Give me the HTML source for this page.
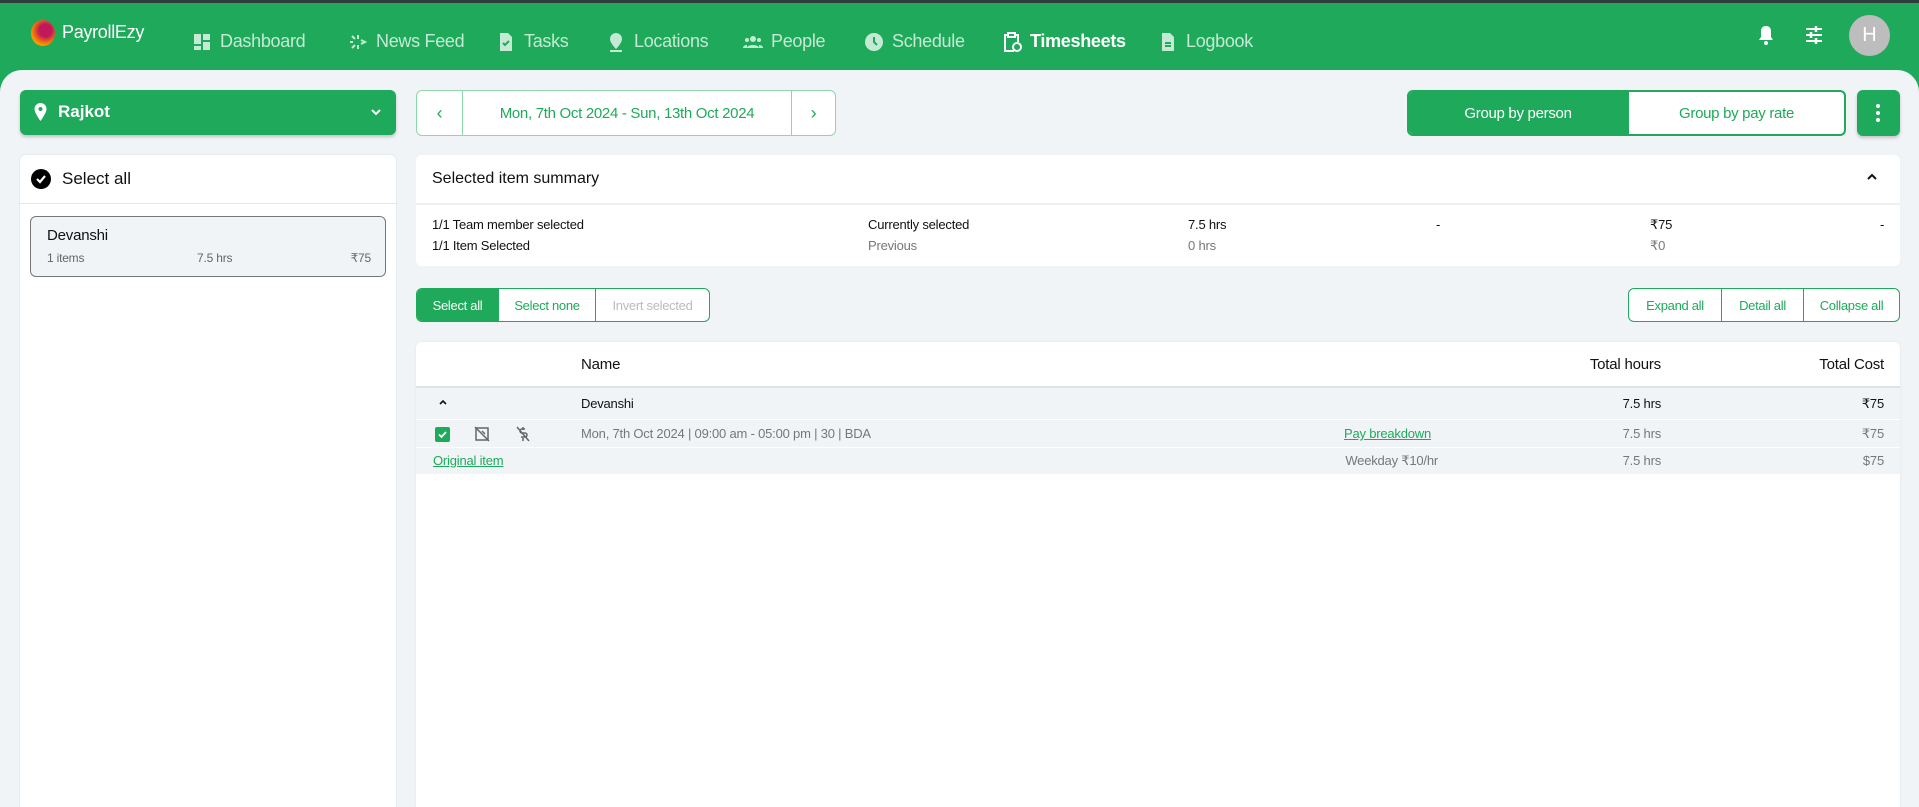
<!DOCTYPE html>
<html><head><meta charset="utf-8"><style>
*{box-sizing:border-box;margin:0;padding:0}
html,body{width:1919px;height:807px;overflow:hidden;background:#f0f4f7}
body{font-family:"Liberation Sans",sans-serif;position:relative;color:#111}
.top{position:absolute;left:0;top:0;width:1919px;height:3px;background:#2f3e3c;z-index:2}
.nav{position:absolute;top:0;left:0;width:1919px;height:100px;background:#1eaa5a}
.ni{position:absolute;top:31px;font-size:18px;color:#c5ead3;display:flex;align-items:center;gap:8px;letter-spacing:-.3px}
.ni svg{width:20px;height:20px}
.main{position:absolute;left:0;top:70px;width:1919px;height:737px;background:#f0f4f7;border-radius:22px 22px 0 0}
.abs{position:absolute}
.card{position:absolute;background:#fff;border-radius:6px 6px 0 0}
.g{color:#1eaa5a}
.btn{position:absolute;border:1px solid #1eaa5a;border-radius:6px;display:flex;overflow:hidden;background:#fff}
.btn div{display:flex;align-items:center;justify-content:center;font-size:13px;color:#1eaa5a;border-left:1px solid #1eaa5a;letter-spacing:-.3px}
.btn div:first-child{border-left:none}
.t{position:absolute;font-size:13px;letter-spacing:-.2px}
</style></head><body>
<div class="top"></div>
<div class="nav">
 <div class="abs" style="left:31px;top:20px;width:24px;height:26px;border-radius:50%;background:radial-gradient(circle at 60% 40%,#c2185b 30%,#f57c00 60%,#ffb300 80%)"></div>
 <div class="abs" style="left:62px;top:22px;font-size:18px;color:#fff;letter-spacing:-.3px">PayrollEzy</div>
 <div class="ni" style="left:192px"><svg viewBox="0 0 20 20" fill="#c5ead3"><rect x="2" y="2" width="7" height="10"/><rect x="11" y="2" width="7" height="6"/><rect x="2" y="14" width="7" height="4"/><rect x="11" y="10" width="7" height="8"/></svg>Dashboard</div>
 <div class="ni" style="left:348px"><svg viewBox="0 0 20 20" fill="none" stroke="#c5ead3" stroke-width="2"><path d="M4 4l3 3M2 10h3M4 16l3-3M10 3v4M10 13v4M13 8l4 2-4 2"/></svg>News Feed</div>
 <div class="ni" style="left:496px"><svg viewBox="0 0 20 20"><path d="M4 1h8l4 4v14H4z" fill="#c5ead3"/><path d="M7 11l2 2 4-4" stroke="#1eaa5a" stroke-width="2" fill="none"/></svg>Tasks</div>
 <div class="ni" style="left:606px"><svg viewBox="0 0 20 20" fill="#c5ead3"><path d="M10 1a6 6 0 0 1 6 6c0 4-6 10-6 10S4 11 4 7a6 6 0 0 1 6-6z"/><rect x="4" y="18" width="12" height="2"/></svg>Locations</div>
 <div class="ni" style="left:743px"><svg viewBox="0 0 20 20" fill="#c5ead3"><circle cx="10" cy="7" r="3"/><circle cx="4" cy="8" r="2"/><circle cx="16" cy="8" r="2"/><path d="M4 16c0-4 12-4 12 0zM0 16c0-3 4-3 4-3v3zM20 16c0-3-4-3-4-3v3z"/></svg>People</div>
 <div class="ni" style="left:864px"><svg viewBox="0 0 20 20"><circle cx="10" cy="10" r="9" fill="#c5ead3"/><path d="M10 5v5l3 3" stroke="#1eaa5a" stroke-width="2" fill="none"/></svg>Schedule</div>
 <div class="ni" style="left:1002px;color:#fff;font-weight:bold"><svg viewBox="0 0 20 20" fill="none" stroke="#fff" stroke-width="2"><path d="M12 19H3V3h3M13 3h3v7"/><rect x="6" y="1" width="7" height="4"/><circle cx="15" cy="15" r="4"/></svg>Timesheets</div>
 <div class="ni" style="left:1158px"><svg viewBox="0 0 20 20"><path d="M4 1h8l4 4v14H4z" fill="#c5ead3"/><path d="M7 11h6M7 14h6" stroke="#1eaa5a" stroke-width="2"/></svg>Logbook</div>
 <svg class="abs" style="left:1756px;top:24px" width="20" height="22" viewBox="0 0 20 22" fill="#fff"><path d="M10 2c-3 0-5 2-5 5v6l-2 3h14l-2-3V7c0-3-2-5-5-5z"/><circle cx="10" cy="19" r="2"/></svg>
 <svg class="abs" style="left:1804px;top:25px" width="20" height="20" viewBox="0 0 20 20" stroke="#fff" stroke-width="2"><path d="M2 4h16M2 10h16M2 16h16"/><path d="M12 1v6M7 7v6M12 13v6" stroke-width="2.5"/></svg>
 <div class="abs" style="left:1849px;top:15px;width:41px;height:41px;border-radius:50%;background:#bdbdbd;color:#fff;font-size:20px;display:flex;align-items:center;justify-content:center">H</div>
</div>
<div class="main"></div>
<div class="abs" style="left:20px;top:90px;width:376px;height:45px;background:#1eaa5a;border-radius:6px;box-shadow:0 2px 3px rgba(0,0,0,.2);color:#fff;font-size:17px;font-weight:bold">
 <svg class="abs" style="left:14px;top:13px" width="13" height="18" viewBox="0 0 13 18" fill="#fff"><path d="M6.5 0A6 6 0 0 1 12.5 6c0 4-6 12-6 12S.5 10 .5 6A6 6 0 0 1 6.5 0z"/><circle cx="6.5" cy="6" r="2" fill="#1eaa5a"/></svg>
 <span class="abs" style="left:38px;top:12px">Rajkot</span>
 <svg class="abs" style="left:350px;top:18px" width="12" height="8" viewBox="0 0 12 8" fill="none" stroke="#fff" stroke-width="2"><path d="M2 2l4 4 4-4"/></svg>
</div>
<div class="btn" style="left:416px;top:90px;width:420px;height:46px;border-color:#8fd6ac">
 <div style="width:45px;border-color:#8fd6ac;font-size:18px">‹</div>
 <div style="width:329px;border-color:#8fd6ac;font-size:15px">Mon, 7th Oct 2024 - Sun, 13th Oct 2024</div>
 <div style="flex:1;border-color:#8fd6ac;font-size:18px">›</div>
</div>
<div class="btn" style="left:1407px;top:90px;width:439px;height:46px;border-width:2px">
 <div style="width:218px;background:#1eaa5a;color:#fff;font-size:15px">Group by person</div>
 <div style="flex:1;font-size:15px;border-left:2px solid #1eaa5a">Group by pay rate</div>
</div>
<div class="abs" style="left:1857px;top:90px;width:43px;height:46px;background:#1eaa5a;border-radius:6px;box-shadow:0 2px 3px rgba(0,0,0,.2)">
 <div class="abs" style="left:19px;top:14px;width:4px;height:4px;background:#fff;border-radius:2px;box-shadow:0 7px 0 #fff,0 14px 0 #fff"></div>
</div>
<div class="card" style="left:20px;top:155px;width:376px;height:652px;box-shadow:0 0 2px rgba(0,0,0,.1)">
 <div class="abs" style="left:0;top:48px;width:376px;height:1px;background:#e4e8eb"></div>
 <div class="abs" style="left:11px;top:14px;width:20px;height:20px;border-radius:50%;background:#000"></div>
 <svg class="abs" style="left:14px;top:17px" width="14" height="14" viewBox="0 0 14 14" fill="none" stroke="#fff" stroke-width="2.2"><path d="M3 7l3 3 5-6"/></svg>
 <span class="abs" style="left:42px;top:14px;font-size:17px">Select all</span>
 <div class="abs" style="left:10px;top:61px;width:356px;height:61px;background:#f0f4f7;border:1px solid #777;border-radius:6px">
  <span class="t" style="left:16px;top:10px;font-size:15px">Devanshi</span>
  <span class="t" style="left:16px;top:34px;font-size:12px;color:#666">1 items</span>
  <span class="t" style="left:166px;top:34px;font-size:12px;color:#666">7.5 hrs</span>
  <span class="t" style="right:14px;top:34px;font-size:12px;color:#666">₹75</span>
 </div>
</div>
<div class="card" style="left:416px;top:155px;width:1484px;height:111px;border-radius:6px">
 <div class="abs" style="left:0;top:48px;width:1484px;height:2px;background:#eef1f4"></div>
 <span class="abs" style="left:16px;top:15px;font-size:16px">Selected item summary</span>
 <svg class="abs" style="left:1450px;top:18px" width="12" height="8" viewBox="0 0 12 8" fill="none" stroke="#111" stroke-width="2"><path d="M2 6l4-4 4 4"/></svg>
 <span class="t" style="left:16px;top:62px">1/1 Team member selected</span>
 <span class="t" style="left:16px;top:83px">1/1 Item Selected</span>
 <span class="t" style="left:452px;top:62px">Currently selected</span>
 <span class="t" style="left:452px;top:83px;color:#777">Previous</span>
 <span class="t" style="left:772px;top:62px">7.5 hrs</span>
 <span class="t" style="left:772px;top:83px;color:#777">0 hrs</span>
 <span class="t" style="left:1020px;top:62px">-</span>
 <span class="t" style="left:1234px;top:62px">₹75</span>
 <span class="t" style="left:1234px;top:83px;color:#777">₹0</span>
 <span class="t" style="left:1464px;top:62px">-</span>
</div>
<div class="btn" style="left:416px;top:288px;width:294px;height:34px">
 <div style="width:81px;background:#1eaa5a;color:#fff">Select all</div>
 <div style="width:97px">Select none</div>
 <div style="flex:1;color:#bbb">Invert selected</div>
</div>
<div class="btn" style="left:1628px;top:288px;width:272px;height:34px">
 <div style="width:92px">Expand all</div>
 <div style="width:82px">Detail all</div>
 <div style="flex:1">Collapse all</div>
</div>
<div class="card" style="left:416px;top:342px;width:1484px;height:465px;box-shadow:0 0 2px rgba(0,0,0,.08)">
 <span class="t" style="left:165px;top:14px;font-size:15px">Name</span>
 <span class="t" style="right:239px;top:14px;font-size:15px">Total hours</span>
 <span class="t" style="right:16px;top:14px;font-size:15px">Total Cost</span>
 <div class="abs" style="left:0;top:44px;width:1484px;height:2px;background:#dde2e6"></div>
 <div class="abs" style="left:0;top:46px;width:1484px;height:31px;background:#f0f4f7"></div>
 <svg class="abs" style="left:22px;top:57px" width="10" height="7" viewBox="0 0 10 7" fill="none" stroke="#111" stroke-width="1.6"><path d="M2 5l3-3 3 3"/></svg>
 <span class="t" style="left:165px;top:54px">Devanshi</span>
 <span class="t" style="right:239px;top:54px">7.5 hrs</span>
 <span class="t" style="right:16px;top:54px">₹75</span>
 <div class="abs" style="left:0;top:78px;width:1484px;height:27px;background:#f0f4f7"></div>
 <div class="abs" style="left:19px;top:85px;width:15px;height:15px;background:#1eaa5a;border-radius:2px"></div>
 <svg class="abs" style="left:21px;top:87px" width="11" height="11" viewBox="0 0 11 11" fill="none" stroke="#fff" stroke-width="1.8"><path d="M2 5.5l2.5 2.5 4.5-5"/></svg>
 <svg class="abs" style="left:58px;top:84px" width="16" height="16" viewBox="0 0 16 16" fill="none" stroke="#666" stroke-width="1.5"><rect x="2" y="2" width="12" height="12"/><path d="M1 1l14 14M8 5l3 3"/></svg>
 <svg class="abs" style="left:100px;top:84px" width="14" height="16" viewBox="0 0 14 16" fill="none" stroke="#666" stroke-width="1.5"><path d="M9 3H6a2 2 0 0 0 0 4h3a2 2 0 0 1 0 4H5M7 1v3M7 12v3M1 1l12 14"/></svg>
 <span class="t" style="left:165px;top:84px;color:#777">Mon, 7th Oct 2024 | 09:00 am - 05:00 pm | 30 | BDA</span>
 <span class="t g" style="left:928px;top:84px;text-decoration:underline">Pay breakdown</span>
 <span class="t" style="right:239px;top:84px;color:#777">7.5 hrs</span>
 <span class="t" style="right:16px;top:84px;color:#777">₹75</span>
 <div class="abs" style="left:0;top:106px;width:1484px;height:26px;background:#f0f4f7"></div>
 <span class="t g" style="left:17px;top:111px;text-decoration:underline">Original item</span>
 <span class="t" style="right:462px;top:111px;color:#777">Weekday ₹10/hr</span>
 <span class="t" style="right:239px;top:111px;color:#777">7.5 hrs</span>
 <span class="t" style="right:16px;top:111px;color:#777">$75</span>
</div>
</body></html>
